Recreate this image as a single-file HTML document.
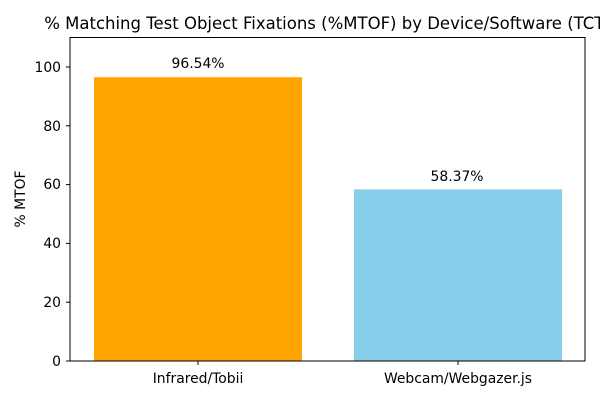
<!DOCTYPE html>
<html><head><style>html,body{margin:0;padding:0;background:#fff;overflow:hidden}</style></head>
<body>
<svg width="600" height="400" viewBox="0 0 600 400" xmlns="http://www.w3.org/2000/svg" font-family="'DejaVu Sans', 'Liberation Sans', sans-serif">
<rect width="600" height="400" fill="#fff"/>
<rect x="94" y="77.2" width="208" height="283.8" fill="#FFA500"/>
<rect x="354" y="189.4" width="208" height="171.6" fill="#87CEEB"/>
<rect x="70" y="37.5" width="515" height="323.5" fill="none" stroke="#000" stroke-width="1"/>
<g stroke="#000" stroke-width="1">
<line x1="66" y1="361" x2="70" y2="361"/>
<line x1="66" y1="302.2" x2="70" y2="302.2"/>
<line x1="66" y1="243.4" x2="70" y2="243.4"/>
<line x1="66" y1="184.6" x2="70" y2="184.6"/>
<line x1="66" y1="125.8" x2="70" y2="125.8"/>
<line x1="66" y1="67" x2="70" y2="67"/>
<line x1="198" y1="361" x2="198" y2="365"/>
<line x1="458" y1="361" x2="458" y2="365"/>
</g>
<g font-size="13.9" fill="#000" text-anchor="end">
<text x="61" y="366">0</text>
<text x="61" y="307">20</text>
<text x="61" y="248">40</text>
<text x="61" y="189">60</text>
<text x="61" y="131">80</text>
<text x="61" y="72">100</text>
</g>
<g font-size="13.9" fill="#000" text-anchor="middle">
<text x="198" y="383">Infrared/Tobii</text>
<text x="458" y="383">Webcam/Webgazer.js</text>
<text x="198" y="68">96.54%</text>
<text x="457" y="181">58.37%</text>
</g>
<text transform="translate(25,199) rotate(-90)" font-size="13.9" text-anchor="middle">% MTOF</text>
<text x="327.5" y="29" font-size="16.5" text-anchor="middle">% Matching Test Object Fixations (%MTOF) by Device/Software (TCT)</text>
</svg>
</body></html>
